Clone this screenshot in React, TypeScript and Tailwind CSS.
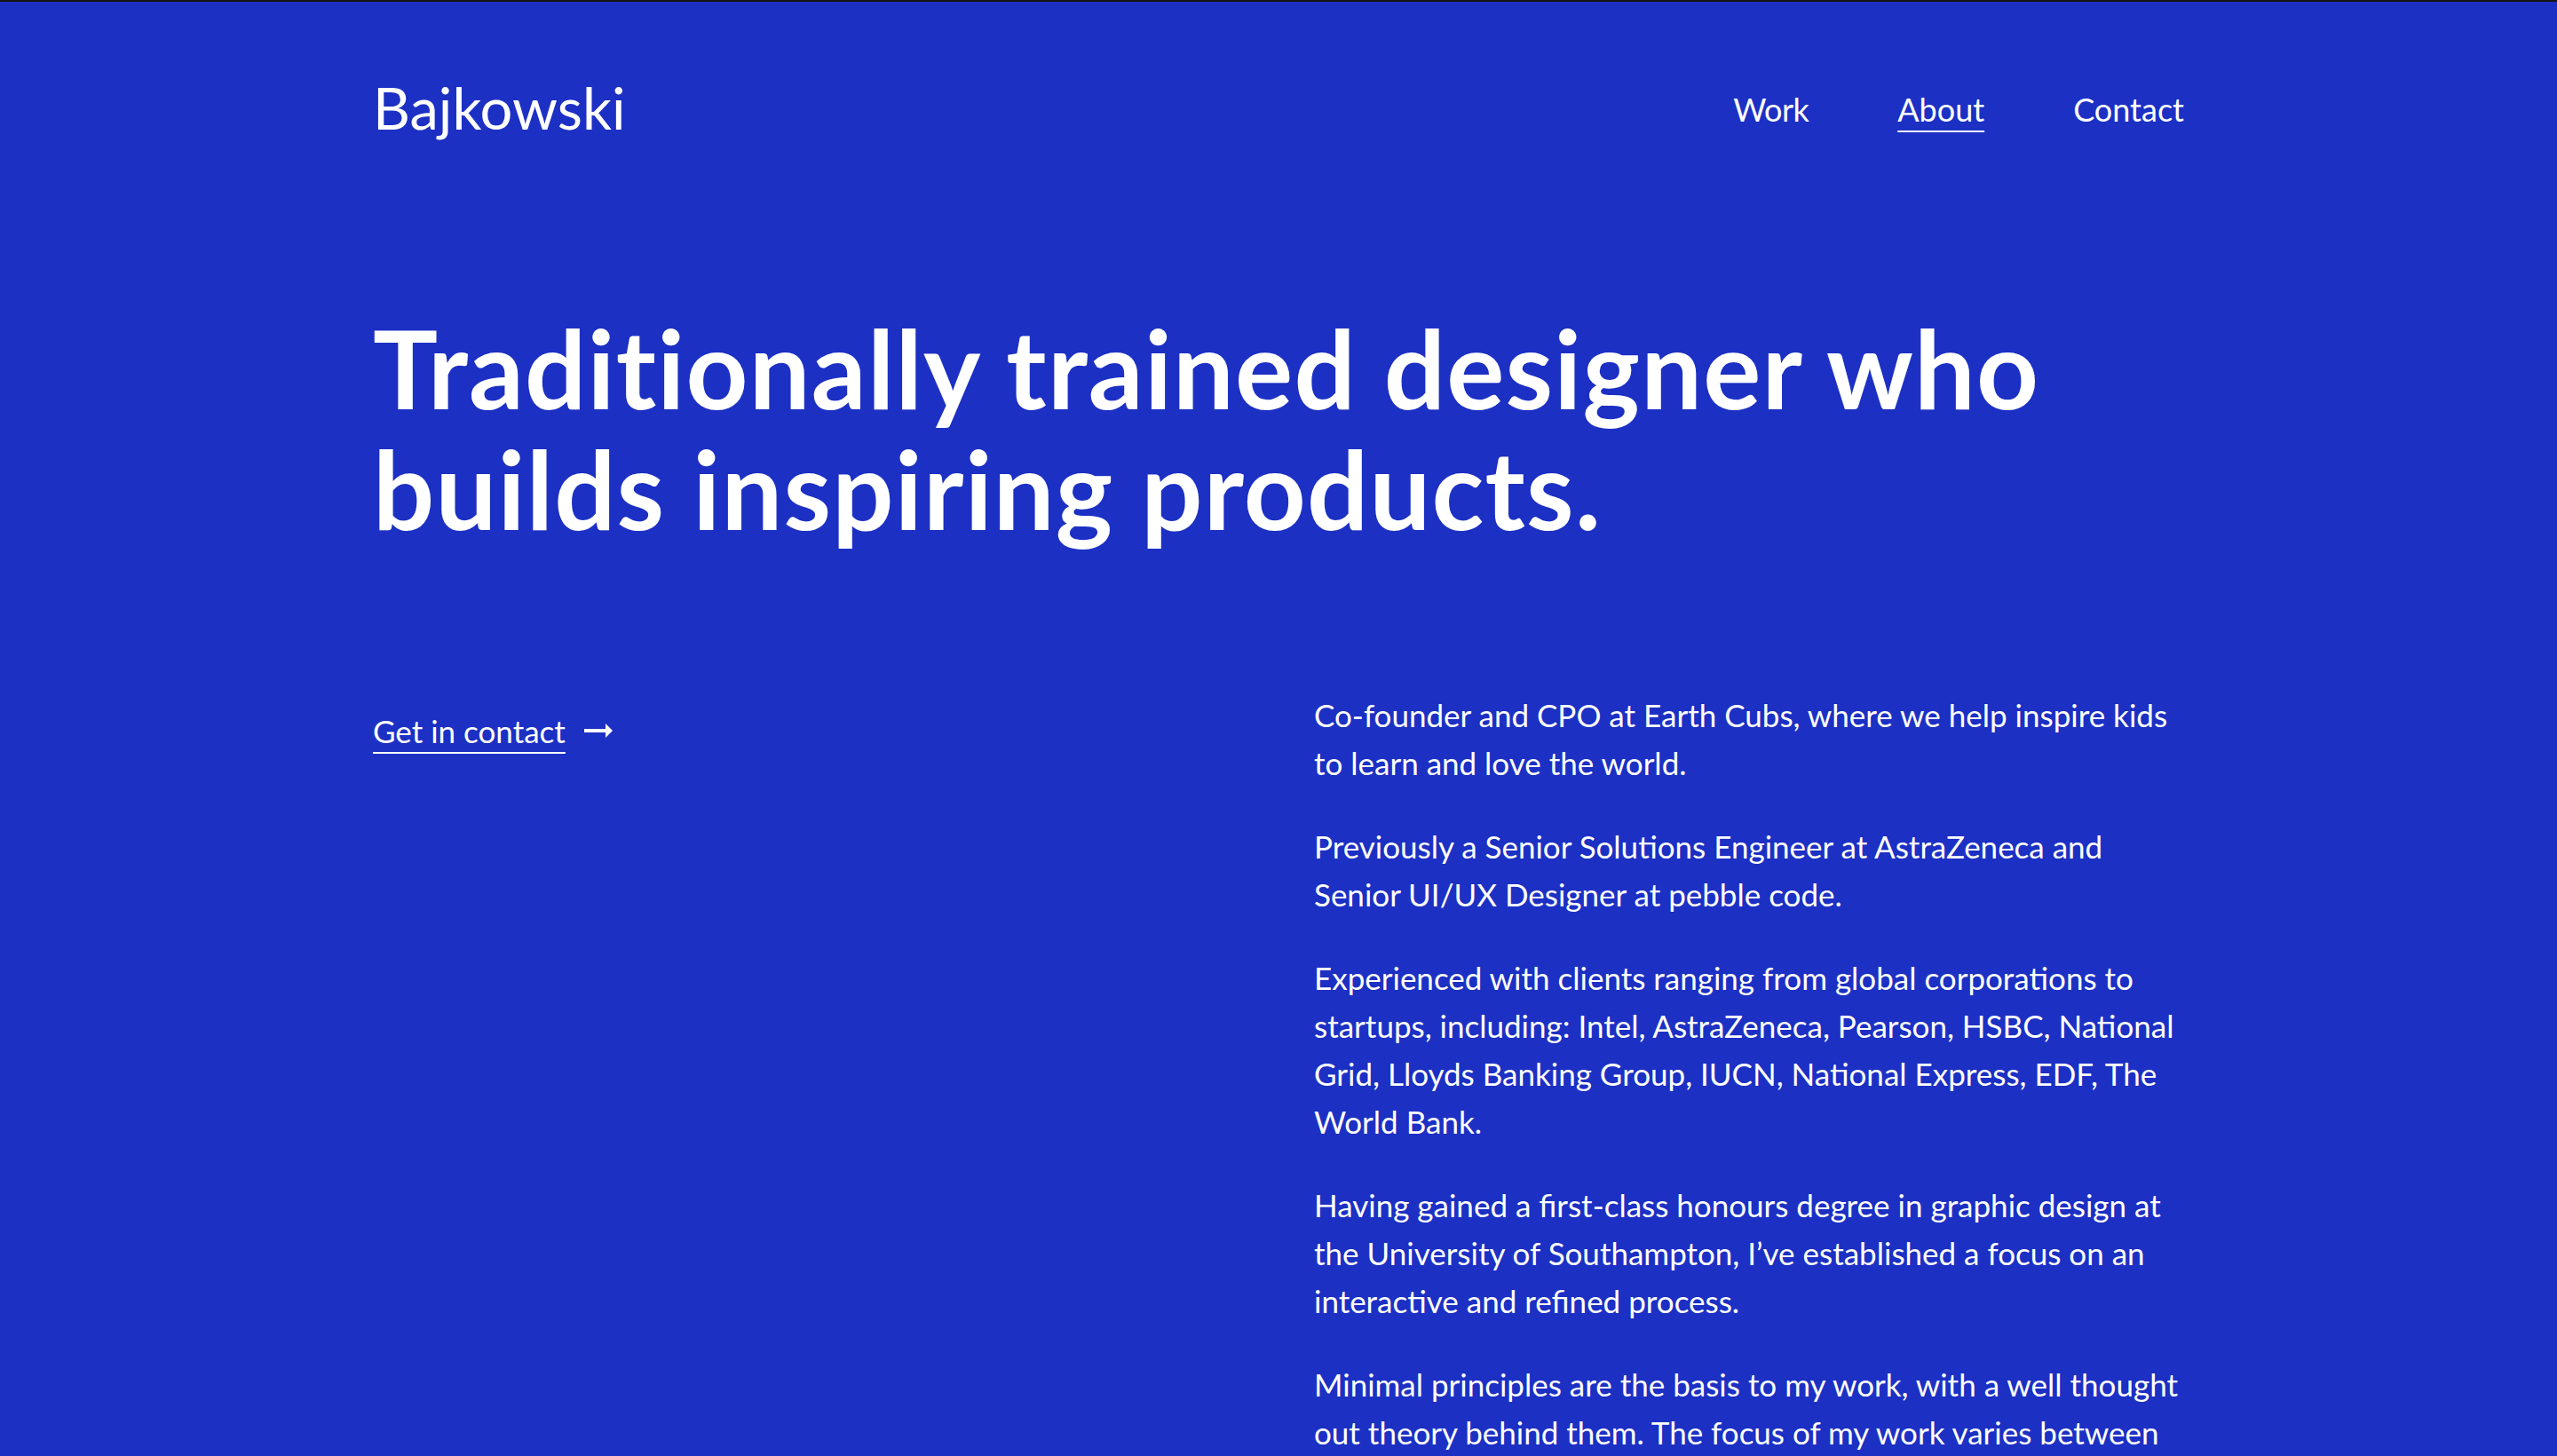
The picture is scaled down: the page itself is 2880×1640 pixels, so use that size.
import React from 'react'

const paragraphs = [
  'Co-founder and CPO at Earth Cubs, where we help inspire kids to learn and love the world.',
  'Previously a Senior Solutions Engineer at AstraZeneca and Senior UI/UX Designer at pebble code.',
  'Experienced with clients ranging from global corporations to startups, including: Intel, AstraZeneca, Pearson, HSBC, National Grid, Lloyds Banking Group, IUCN, National Express, EDF, The World Bank.',
  'Having gained a first-class honours degree in graphic design at the University of Southampton, I\u2019ve established a focus on an interactive and refined process.',
  'Minimal principles are the basis to my work, with a well thought out theory behind them. The focus of my work varies between',
]

function ArrowRight() {
  return (
    <svg width="32" height="16" viewBox="0 0 32 16" fill="currentColor" className="ml-[21px]">
      <rect x="0" y="6" width="25" height="4" />
      <path d="M24 0L32 8L24 16z" />
    </svg>
  )
}

export default function App() {
  return (
    <div className="min-h-screen border-t-2 border-[#141414] bg-[#1c30c4] text-white font-['Lato','Noto_Sans',sans-serif]">
      <div className="mx-auto w-[2040px]">
        <header className="flex items-center justify-between pt-[87px]">
          <a href="#" className="text-[65px] leading-none">
            Bajkowski
          </a>
          <nav className="flex items-center gap-[100px] pt-[3px] text-[36px] leading-none">
            <a href="#" className="tracking-[-0.5px]">Work</a>
            <a href="#" className="underline decoration-2 underline-offset-[10px]">
              About
            </a>
            <a href="#">Contact</a>
          </nav>
        </header>

        <h1 className="mt-[192px] text-[122px] font-bold leading-[136px] tracking-[1.2px]">
          Traditionally trained designer who
          <br />
          builds inspiring products.
        </h1>

        <section className="mt-[160px] grid grid-cols-2 gap-[80px] text-[35px] leading-[54px]">
          <div>
            <a href="#" className="mt-[18px] inline-flex items-center">
              <span className="underline decoration-2 underline-offset-[10px]">Get in contact</span>
              <ArrowRight />
            </a>
          </div>
          <div className="space-y-[40px]">
            {paragraphs.map((p) => (
              <p key={p.slice(0, 12)}>{p}</p>
            ))}
          </div>
        </section>
      </div>
    </div>
  )
}
